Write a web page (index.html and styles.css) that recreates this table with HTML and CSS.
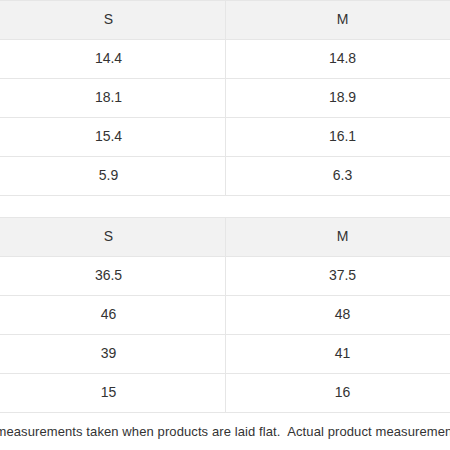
FILE: index.html
```html
<!DOCTYPE html>
<html lang="en">
<head>
  <meta charset="UTF-8" />
  <meta name="viewport" content="width=device-width, initial-scale=1" />
  <title>Size Guide</title>
  <link rel="stylesheet" href="styles.css">
</head>
<body>

<div class="size-guide">
  <table class="size-table">
    <colgroup>
      <col class="col-label">
      <col class="col-size">
      <col class="col-size">
    </colgroup>
    <tr class="head"><td>Size</td><td>S</td><td>M</td></tr>
    <tr><td>Shoulder</td><td>14.4</td><td>14.8</td></tr>
    <tr><td>Chest</td><td>18.1</td><td>18.9</td></tr>
    <tr><td>Length</td><td>15.4</td><td>16.1</td></tr>
    <tr><td>Sleeve</td><td>5.9</td><td>6.3</td></tr>
  </table>

  <table class="size-table second">
    <colgroup>
      <col class="col-label">
      <col class="col-size">
      <col class="col-size">
    </colgroup>
    <tr class="head"><td>Size</td><td>S</td><td>M</td></tr>
    <tr><td>Shoulder</td><td>36.5</td><td>37.5</td></tr>
    <tr><td>Chest</td><td>46</td><td>48</td></tr>
    <tr><td>Length</td><td>39</td><td>41</td></tr>
    <tr><td>Sleeve</td><td>15</td><td>16</td></tr>
  </table>

  <div class="note">All measurements taken when products are laid flat.  Actual product measurements may vary by 1-3cm.</div>
</div>

</body>
</html>
```

FILE: styles.css
```css
body {
  margin: 0;
  font-family: 'Liberation Sans', Arial, sans-serif;
  background: #fff;
  color: #333;
  overflow: hidden;
}
.size-guide {
  margin-left: -120px;
  width: 600px;
}
.size-table {
  border-collapse: collapse;
  table-layout: fixed;
  width: 580px;
  font-size: 14px;
}
.size-table td {
  border: 1px solid #e6e6e6;
  height: 36px;
  padding: 0 0 2px;
  text-align: center;
  line-height: 36px;
}
.col-label { width: 111px; }
.col-size { width: 234px; }
.head td {
  background: #f2f2f2;
}
.second {
  margin-top: 21px;
}
.note {
  font-size: 13px;
  letter-spacing: 0.1px;
  line-height: 37px;
  padding-left: 97px;
  white-space: pre;
  border-bottom: 1px solid #e6e6e6;
}
```
